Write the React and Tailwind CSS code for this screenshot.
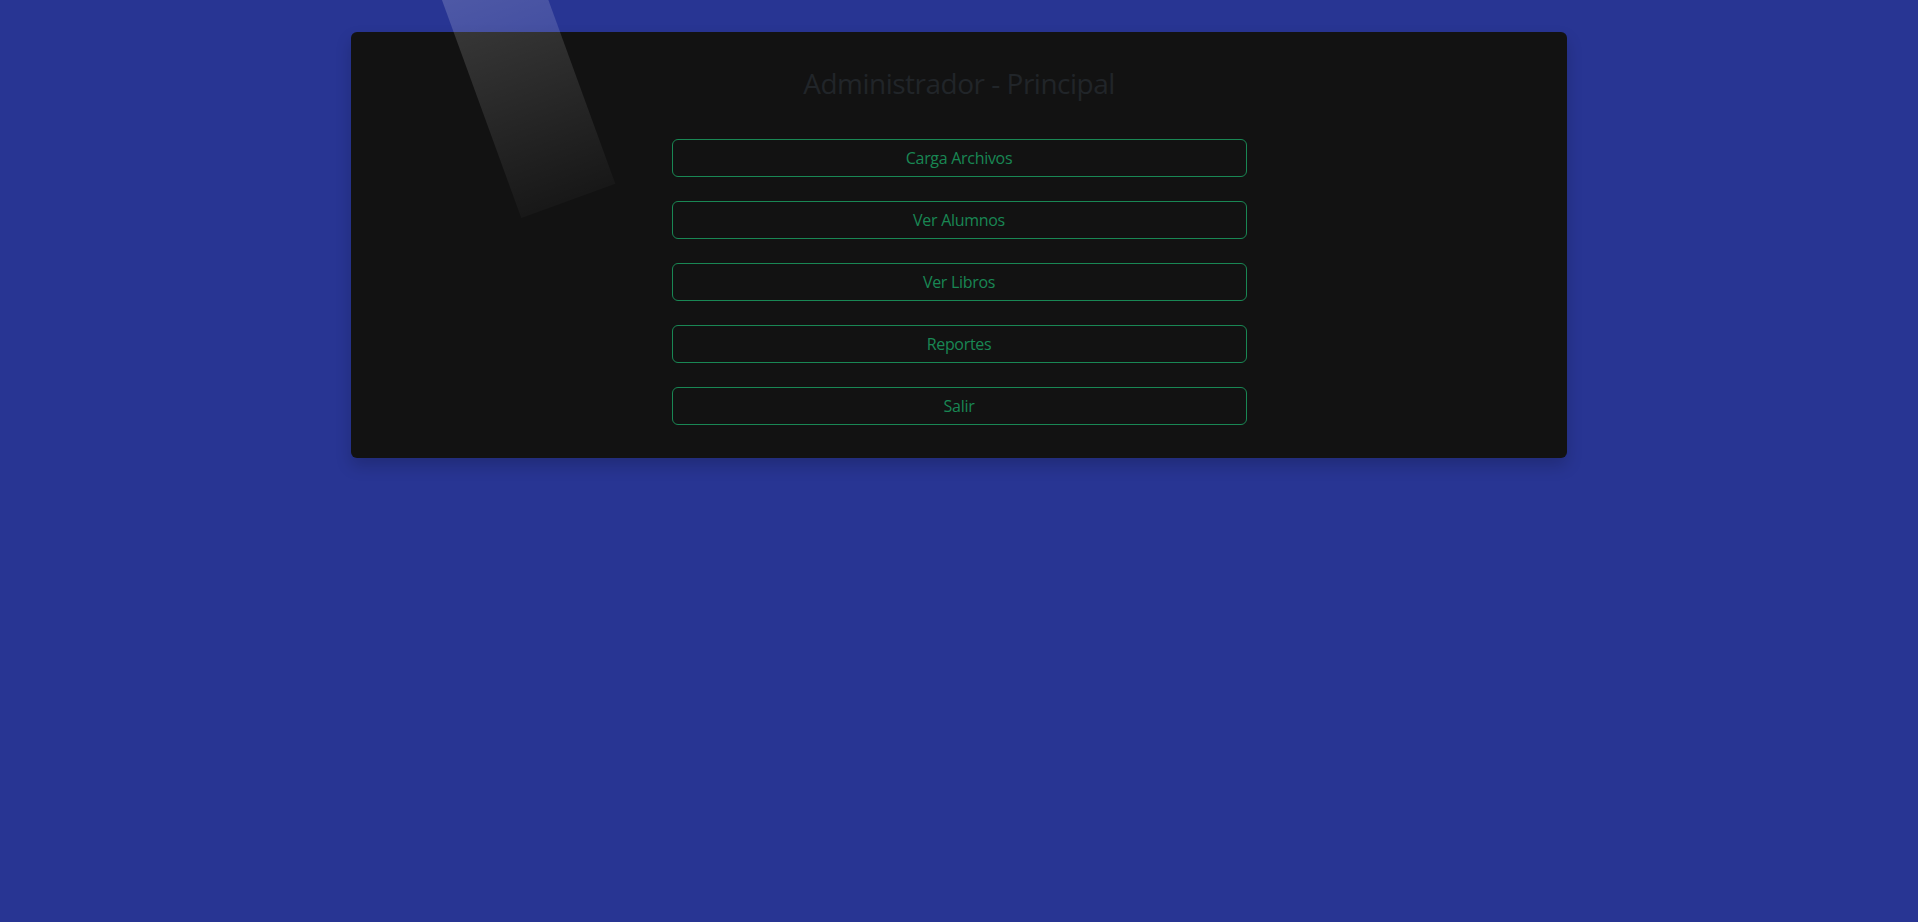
import React from 'react';

const menu = ['Carga Archivos', 'Ver Alumnos', 'Ver Libros', 'Reportes', 'Salir'];

export default function App() {
  return (
    <div
      className="relative min-h-screen w-full overflow-hidden bg-[#283593] pt-8"
      style={{ fontFamily: '"Open Sans", "Noto Sans", sans-serif' }}
    >
      <div className="mx-auto w-[1216px] rounded-[6px] bg-[#121212] pt-[32px] pb-[33px] shadow-[0_8px_16px_rgba(0,0,0,0.18)]">
        <h2 className="text-center text-[28px] leading-[38px] font-normal tracking-[-0.5px] text-[#212529]">
          Administrador - Principal
        </h2>

        <div className="mx-auto mt-[37px] flex w-[575px] flex-col gap-6">
          {menu.map((label) => (
            <button
              key={label}
              type="button"
              className="h-[38px] w-full rounded-[6px] border border-[#198754] bg-transparent text-[16px] leading-6 tracking-[-0.3px] text-[#198754]"
            >
              {label}
            </button>
          ))}
        </div>
      </div>

      {/* light streak over the top-left corner */}
      <div className="pointer-events-none absolute left-[467px] top-[-90px] h-[300px] w-[100px] rotate-[-20deg] bg-gradient-to-b from-white/[0.22] to-white/[0.025]" />
    </div>
  );
}
